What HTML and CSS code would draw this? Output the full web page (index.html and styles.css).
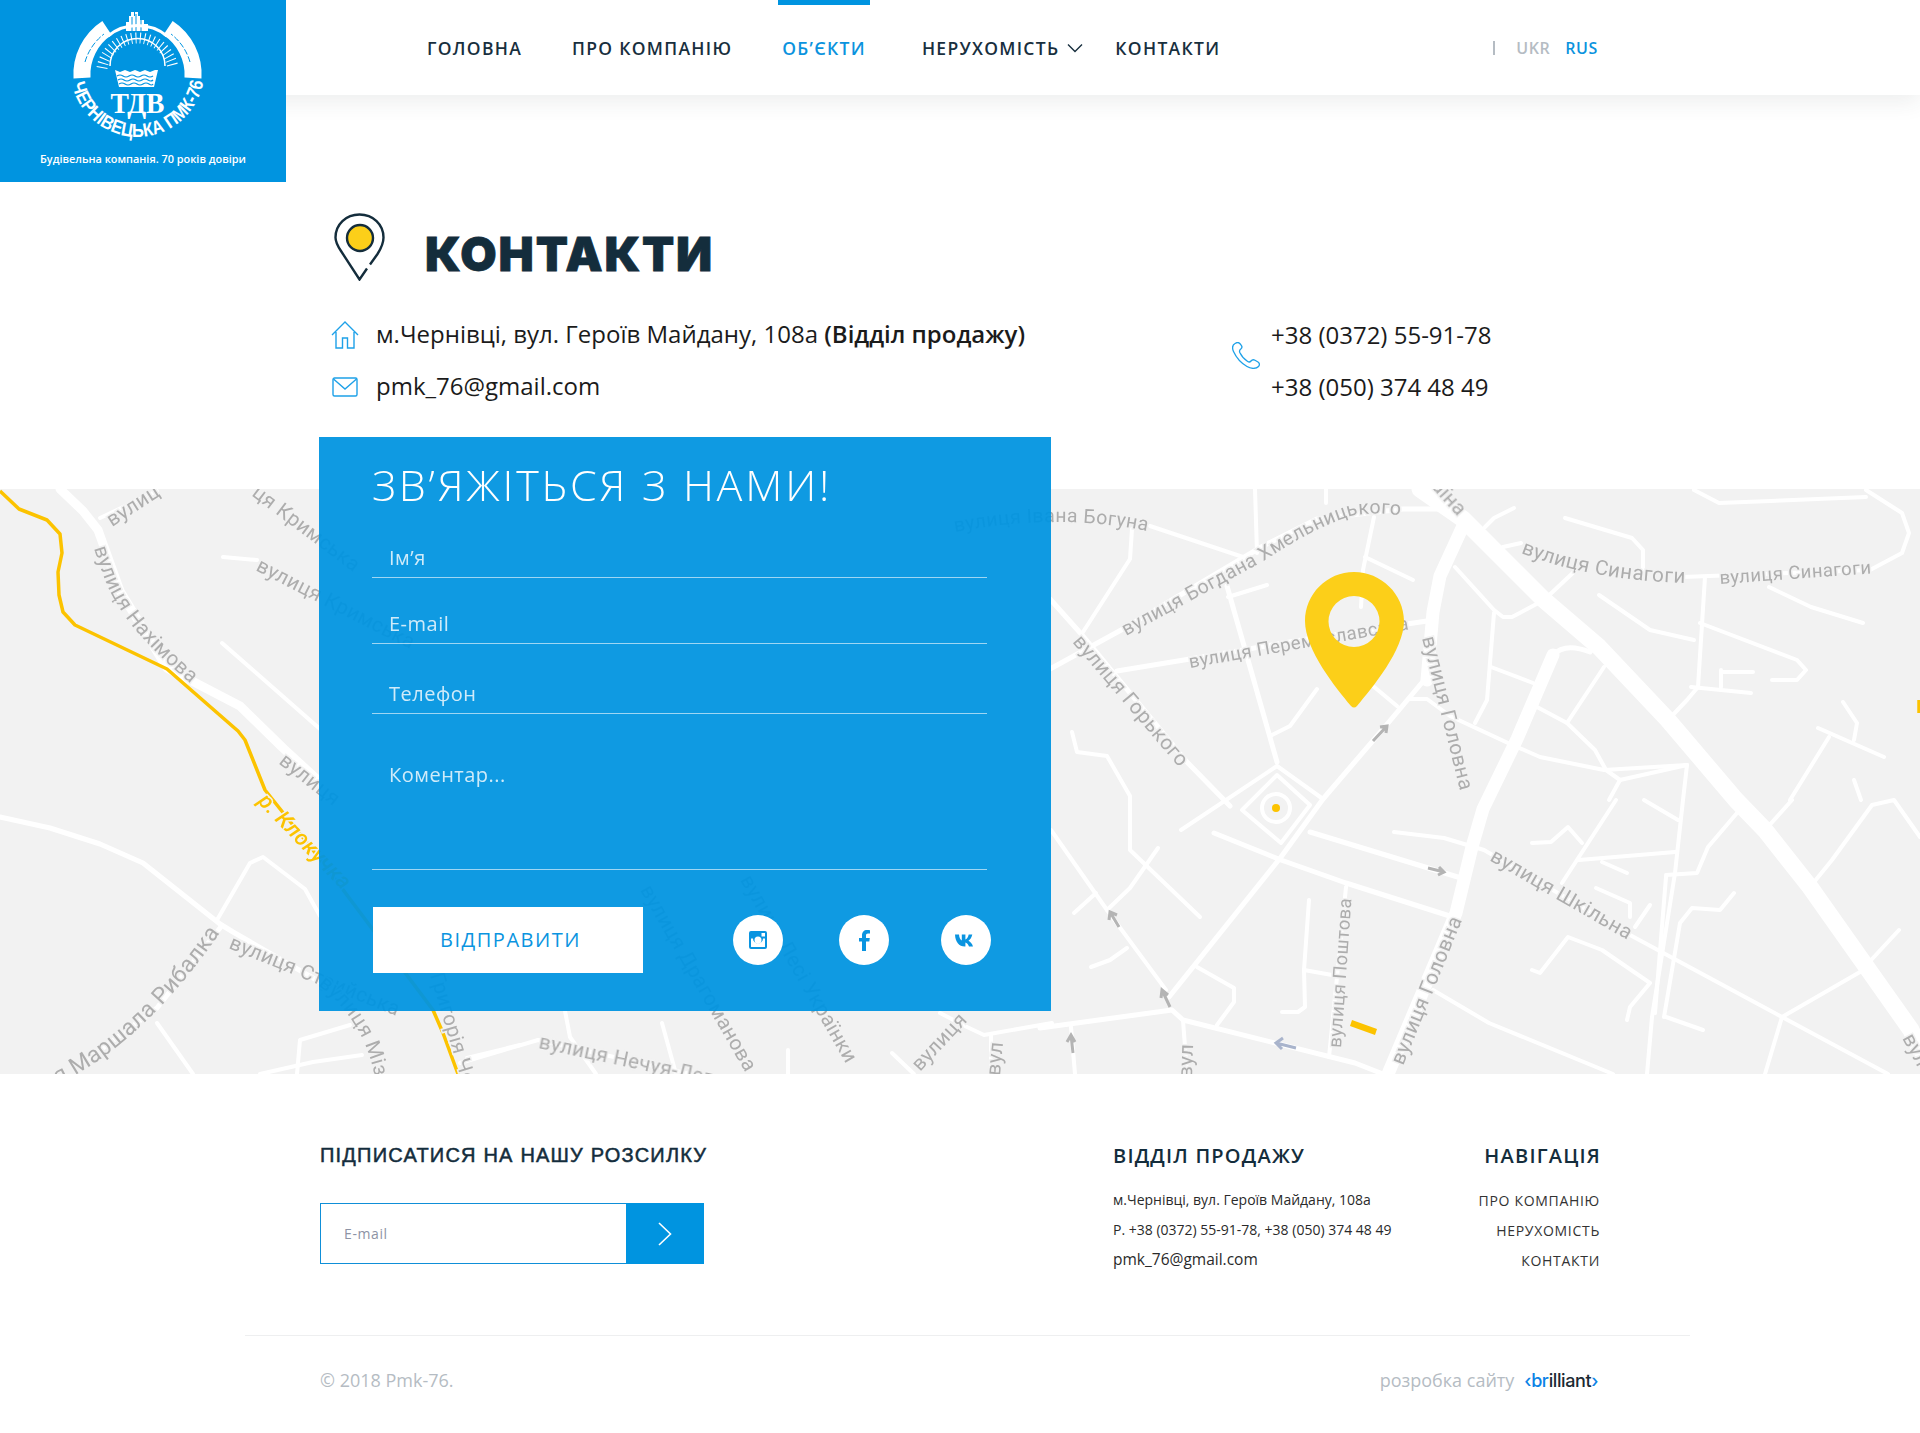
FILE: index.html
```html
<!DOCTYPE html>
<html lang="uk">
<head>
    <meta charset="UTF-8">
    <meta name="viewport" content="width=device-width, initial-scale=1.0">
    <title>Контакти</title>
    <link rel="stylesheet" href="styles.css">
</head>
<body>

    <header class="top-bar">
        <a class="logo" href="#">
            <svg class="logo-mark" viewBox="0 0 286 150" width="286" height="150">
                <!-- skyline -->
                <path fill="#fff" d="M126 31V22h3v-6h2v-4h3v4h1v-4h3v4h2v4h4v4h4v7z"/>
                <path stroke="#0094e0" stroke-width="1" fill="none" d="M132 17v14M136 14v17M141 20v11"/>
                <!-- top arc and wheat -->
                <path fill="none" stroke="#fff" stroke-width="3" d="M108 36A47 47 0 0 1 167 36"/>
                <path fill="none" stroke="#fff" stroke-width="17" d="M82 78A55.500 55.500 0 0 1 107 28"/>
                <path fill="none" stroke="#fff" stroke-width="17" d="M193 78A55.500 55.500 0 0 0 168 28"/>
                <path fill="none" stroke="#0094e0" stroke-width="1" stroke-dasharray="6 2" d="M85 62A54 54 0 0 1 104 34"/>
                <path fill="none" stroke="#0094e0" stroke-width="1" stroke-dasharray="6 2" d="M190 62A54 54 0 0 0 171 34"/>
                <!-- sun -->
                <path fill="none" stroke="#fff" stroke-width="1.600" d="M110 66A27.500 27.500 0 0 1 165 66"/>
                <path fill="none" stroke="#fff" stroke-width="11" stroke-dasharray="1 3.400" d="M102 68A36 36 0 0 1 173 68"/>
                <!-- basket -->
                <path fill="#fff" d="M115 70l5 2 5-2 5 2 5-2 5 2 5-2 5 2 5-2 3 0-4 17h-35z"/>
                <path fill="none" stroke="#0094e0" stroke-width="1.200" d="M117 76q3-2 6 0t6 0 6 0 6 0 6 0 6 0M118 80q3-2 6 0t6 0 6 0 6 0 6 0 5 0M119 84q3-2 6 0t6 0 6 0 6 0 6 0 4 0"/>
                <text class="logo-tdv" x="137.5" y="113" text-anchor="middle" textLength="54" lengthAdjust="spacingAndGlyphs">ТДВ</text>
                <path id="logoArc" fill="none" d="M72 84A67 67 0 0 0 203 84"/>
                <text class="logo-ring"><textPath href="#logoArc" textLength="184" lengthAdjust="spacingAndGlyphs">ЧЕРНІВЕЦЬКА ПМК-76</textPath></text>
            </svg>
            <span class="logo-text">Будівельна компанія. 70 років довіри</span>
        </a>

        <nav class="main-nav">
            <a href="#">Головна</a>
            <a href="#">Про компанію</a>
            <a class="active" href="#">Об’єкти</a>
            <a class="has-sub" href="#">Нерухомість
                <svg width="16" height="10" viewBox="0 0 16 10"><path d="M1 1.500l7 7 7-7" fill="none" stroke="#182f3e" stroke-width="1.400"/></svg>
            </a>
            <a href="#">Контакти</a>
        </nav>

        <div class="lang">
            <span class="lang-sep"></span>
            <a href="#">UKR</a>
            <a class="active" href="#">RUS</a>
        </div>
    </header>

    <section class="contacts">
        <div class="contacts-title">
            <svg width="51" height="68" viewBox="0 0 51 68">
                <path d="M33 55.500L25.500 66.500 7 38C3 32 1.500 27.500 1.500 24.500 1.500 11.500 12 1.500 25.500 1.500S49.500 11.500 49.500 24.500c0 5-2.500 11-6 16.500L36 51.500" fill="none" stroke="#142d3c" stroke-width="2.400"/>
                <circle cx="26" cy="25" r="13" fill="#fccf19" stroke="#142d3c" stroke-width="2.400"/>
            </svg>
            <h1>Контакти</h1>
        </div>

        <div class="contacts-info">
            <div class="contacts-left">
                <p class="info-row info-address">
                    <svg width="28" height="28" viewBox="0 0 28 28"><path d="M1 14L14 1l13 13M5 11v16h6.500V17h5v10H23V11" fill="none" stroke="#1ea1e8" stroke-width="1.400"/></svg>
                    <span>м.Чернівці, вул. Героїв Майдану, 108а <b>(Відділ продажу)</b></span>
                </p>
                <p class="info-row info-mail">
                    <svg width="28" height="20" viewBox="0 0 28 20"><rect x="2" y="1" width="24" height="18" rx="1.500" fill="none" stroke="#1ea1e8" stroke-width="1.400"/><path d="M2.500 2l11.500 10L25.500 2" fill="none" stroke="#1ea1e8" stroke-width="1.400"/></svg>
                    <span>pmk_76@gmail.com</span>
                </p>
            </div>
            <div class="contacts-right">
                <svg class="phone-icon" width="28" height="27" viewBox="0 0 28 27"><path d="M3 1.500C.5 3 0 6 1.500 9.500 4 15 9 21 15 24.500c4 2.500 9 2.500 11.500 0 1.500-1.500 1-3.500-.5-4.500l-3-1.800c-1.500-.8-3-.5-4 .8-.8 1-2 1.300-3.300.5C12.500 17.500 9.500 14 7.800 10.500 7.200 9 7.500 8 8.800 7 10 6 10.200 4.500 9.300 3.300L7.800 1.500C6.500 0 4.500.5 3 1.500z" fill="none" stroke="#1ea1e8" stroke-width="1.300"/></svg>
                <div class="phones">
                    <p>+38 (0372) 55-91-78</p>
                    <p>+38 (050) 374 48 49</p>
                </div>
            </div>
        </div>
    </section>

    <section class="map">
        <svg class="map-svg" viewBox="0 489 1920 585" width="1920" height="585">
            <g class="map-base">
                <g class="road r1">
                    <path d="M100 518L157 491"/>
                    <path d="M223 557L257 560"/>
                    <path d="M222 643L320 729L420 810"/>
                    <path d="M217 920L250 863L263 857L305 889L320 916"/>
                    <path d="M157 1023L193 1074"/>
                    <path d="M350 1025L300 1040L297 1074"/>
                    <path d="M362 1055L313 1062L260 1074"/>
                    <path d="M467 1058L520 1045"/>
                    <path d="M460 1063L538 1040L690 1074"/>
                    <path d="M565 1011L570 1037L596 1074"/>
                    <path d="M662 1023L676 1074"/>
                    <path d="M788 1050V1074M892 1053L914 1074"/>
                    <path d="M1052 1023L984 1035L967 1027L940 1013"/>
                    <path d="M991 1035V1074"/>
                    <path d="M520 700L720 760L900 960M640 489L720 700M860 560L1000 800"/>
                    <path d="M1150 526L1243 557"/>
                    <path d="M1132 529L1130 559L1083 632"/>
                    <path d="M1255 489L1257 553"/>
                    <path d="M1326 489V503"/>
                    <path d="M1374 517L1363 570L1361 607"/>
                    <path d="M1365 557L1413 580"/>
                    <path d="M1228 597L1267 585"/>
                    <path d="M1317 689L1290 726L1270 736"/>
                    <path d="M1072 732L1077 752L1107 756L1130 796V809"/>
                    <path d="M1373 686L1397 706"/>
                    <path d="M1410 699H1427L1450 716L1508 743L1540 757L1604 770L1687 765"/>
                    <path d="M1485 527L1494 518L1514 508"/>
                    <path d="M1503 547L1521 543"/>
                    <path d="M1694 490L1719 503L1866 497"/>
                    <path d="M1866 490L1902 513L1909 533L1902 553L1870 570L1682 577"/>
                    <path d="M1565 518L1632 538L1643 550V570"/>
                    <path d="M1705 577L1698 687L1687 700L1668 720"/>
                    <path d="M1599 595L1650 630L1694 640"/>
                    <path d="M1700 623L1797 660L1806 670L1797 680L1772 680"/>
                    <path d="M1769 587L1811 607L1863 623"/>
                    <path d="M1691 687L1751 693M1721 670V687M1721 672H1753"/>
                    <path d="M1455 567L1494 610L1503 617H1512L1544 600L1576 570"/>
                    <path d="M1494 613L1487 700L1475 723"/>
                    <path d="M1491 667L1533 683"/>
                    <path d="M1567 723L1604 667"/>
                    <path d="M1537 707L1567 723L1595 750L1606 770L1620 780L1687 765"/>
                    <path d="M1843 702L1857 723L1854 740"/>
                    <path d="M1818 728L1884 757"/>
                    <path d="M1829 737L1790 800"/>
                    <path d="M1854 780L1861 800"/>
                    <path d="M1687 765L1683 800L1675 873L1652 1017L1647 1074"/>
                    <path d="M1666 877L1655 1013"/>
                    <path d="M1620 780L1609 800"/>
                    <path d="M1130 800V850L1200 917"/>
                    <path d="M1158 848L1130 888L1107 910"/>
                    <path d="M1051 830L1107 910L1166 990"/>
                    <path d="M1074 913L1096 893"/>
                    <path d="M1091 967L1110 960L1127 948"/>
                    <path d="M1197 967L1234 988V1002L1217 1025"/>
                    <path d="M1183 1020L1187 1074"/>
                    <path d="M1071 1027L1075 1074"/>
                    <path d="M1309 900L1304 970L1305 1007L1298 1012H1282"/>
                    <path d="M1304 970L1332 975"/>
                    <path d="M1346 887L1329 1057"/>
                    <path d="M1394 832L1444 838L1484 850L1630 935L1782 1017L1888 1074"/>
                    <path d="M1433 990L1489 1023L1613 1074"/>
                    <path d="M1532 843L1551 842L1568 827L1582 843"/>
                    <path d="M1616 800L1562 883"/>
                    <path d="M1579 860L1675 852"/>
                    <path d="M1602 862L1627 873"/>
                    <path d="M1644 800L1678 820"/>
                    <path d="M1666 875L1697 873L1708 847L1737 813"/>
                    <path d="M1734 893L1720 910L1692 908L1680 923L1664 1017"/>
                    <path d="M1532 970L1540 973L1568 937L1602 950L1650 983L1630 1007L1627 1020"/>
                    <path d="M1666 1017L1703 1030"/>
                    <path d="M1782 1017L1860 972L1899 930"/>
                    <path d="M1782 1017L1765 1074"/>
                    <path d="M1765 830L1792 800"/>
                    <path d="M1810 887L1832 860L1872 805L1894 800L1920 837"/>
                    <path d="M1596 888L1630 903V917"/>
                    <path d="M1650 905L1635 927"/>
                    <path d="M1181 830L1277 766L1323 799"/>
                    <path d="M1242 810L1277 775L1310 805L1281 843Z"/>
                    <path d="M1262 808a14 14 0 1 0 28 0a14 14 0 1 0 -28 0"/>
                </g>
                <g class="road r2">
                    <path d="M1050 669L1123 629L1263 546L1317 519L1403 509H1460"/>
                    <path d="M1117 671L1190 659L1307 639L1427 621"/>
                    <path d="M1050 599L1083 636L1187 762L1230 806"/>
                    <path d="M1227 586L1277 762"/>
                    <path d="M1214 833L1281 860L1346 883L1456 918"/>
                    <path d="M1310 832L1461 878"/>
                    <path d="M1425 679L1383 729L1323 799L1281 857L1169 997"/>
                    <path d="M1040 1028L1172 1010L1183 1020L1355 1063L1383 1074"/>
                    <path d="M0 817L50 828L100 844L143 863L220 924L233 932L320 982"/>
                    <path d="M220 928L157 1008L80 1065"/>
                    <path d="M1765 830L1810 887"/>
                    <path d="M1590 652Q1565 642 1553 655"/>
                </g>
                <g class="road r3">
                    <path d="M60 489L83 511L98 530L120 591L167 668L240 706L283 748L320 782L440 880"/>
                </g>
                <g class="road r4">
                    <path d="M1463 526L1440 576L1433 612L1427 680"/>
                    <path d="M1553 655L1517 739L1483 809L1472 847L1456 913L1388 1074"/>
                </g>
                <g class="road r5">
                    <path d="M1420 489L1463 519L1543 599L1599 647L1668 720L1736 800L1765 830L1810 887L1911 1030L1920 1050"/>
                </g>

                <path class="river" d="M0 491L19 509L47 520L60 534L62 553L58 572L59 595L63 612L75 625L167 669L238 731L245 740L265 790L320 859L433 1010L443 1033L458 1074"/>
                <path class="river" d="M1919 700V713"/>
                <circle cx="1276" cy="808" r="4" fill="#fcc300"/>
                <path d="M1352 1020L1377 1029L1375 1035L1350 1026Z" fill="#fcc300"/>

                <path class="arrow" d="M1373 741L1387 726M1380 727L1387 726L1386 733"/>
                <path class="arrow" d="M1428 868L1444 872M1439 867L1444 872L1438 875"/>
                <path class="arrow" d="M1119 927L1110 912M1109 920L1110 912L1117 915"/>
                <path class="arrow" d="M1170 1007L1162 990M1161 998L1162 990L1168 995"/>
                <path class="arrow" d="M1073 1053L1071 1035M1067 1042L1071 1035L1075 1042"/>
                <path class="arrow blue" d="M1296 1048L1276 1043M1283 1038L1276 1043L1282 1049"/>

                <defs>
                    <path id="p-nah" d="M94 548C110 600 122 625 198 690"/>
                    <path id="p-rib" d="M58 1084Q150 1040 232 915"/>
                    <path id="p-miz" d="M318 985Q365 1020 376 1082"/>
                    <path id="p-gor" d="M430 975L462 1082"/>
                    <path id="p-bog" d="M955 532Q1060 512 1152 532"/>
                    <path id="p-hme" d="M1126 636L1262 562Q1320 524 1355 515Q1390 510 1430 522"/>
                    <path id="p-sin" d="M1521 553Q1590 580 1684 583"/>
                </defs>

                <text class="label" transform="translate(112 527) rotate(-33)">вулиц</text>
                <text class="label"><textPath href="#p-nah">вулиця Нахімова</textPath></text>
                <text class="label" transform="translate(251 495) rotate(37)">ця Кримська</text>
                <text class="label" transform="translate(255 570) rotate(27)">вулиця Кримська</text>
                <text class="label" transform="translate(278 763) rotate(38)">вулиця</text>
                <text class="label yellow" transform="translate(257 802) rotate(46)">р. Клокучка</text>
                <text class="label big"><textPath href="#p-rib">я Маршала Рибалка</textPath></text>
                <text class="label" transform="translate(228 948) rotate(22)">вулиця Стрийська</text>
                <text class="label"><textPath href="#p-miz">вулиця Мізин</textPath></text>
                <text class="label"><textPath href="#p-gor">Григорія Чер</textPath></text>
                <text class="label" transform="translate(538 1048) rotate(12)">вулиця Нечуя-Левицького</text>
                <text class="label" transform="translate(640 890) rotate(60)">вулиця Драгоманова</text>
                <text class="label" transform="translate(740 880) rotate(60)">вулиця Лесі Українки</text>
                <text class="label" transform="translate(920 1072) rotate(-47)">вулиця</text>
                <text class="label" transform="translate(1000 1076) rotate(-85)">вул</text>
                <text class="label mid"><textPath href="#p-bog">вулиця Івана Богуна</textPath></text>
                <text class="label mid"><textPath href="#p-hme">вулиця Богдана Хмельницького</textPath></text>
                <text class="label" text-anchor="end" transform="translate(1458 517) rotate(48)">вулиця Україна</text>
                <text class="label"><textPath href="#p-sin">вулиця Синагоги</textPath></text>
                <text class="label small" transform="translate(1720 584) rotate(-4)">вулиця Синагоги</text>
                <text class="label" transform="translate(1072 642) rotate(49.500)">вулиця Горького</text>
                <text class="label small" transform="translate(1190 668) rotate(-10)">вулиця Перемиславська</text>
                <text class="label" transform="translate(1422 638) rotate(76)">вулиця Головна</text>
                <text class="label small" transform="translate(1341 1048) rotate(-86)">вулиця Поштова</text>
                <text class="label" transform="translate(1403 1066) rotate(-68)">вулиця Головна</text>
                <text class="label" transform="translate(1489 860) rotate(30)">вулиця Шкільна</text>
                <text class="label" transform="translate(1902 1038) rotate(62)">вул</text>
                <text class="label" transform="translate(1192 1078) rotate(-88)">вул</text>
            </g>

            <!-- marker, the hole shows the map through -->
            <path fill="#fccf19" fill-rule="evenodd" d="M1354 572C1381 572 1404 594 1404 621C1404 650 1372 688 1357 706Q1354 709 1351 706C1336 688 1305 650 1305 621C1305 594 1327 572 1354 572ZM1354 596A25.500 25.500 0 1 0 1354 647A25.500 25.500 0 1 0 1354 596Z"/>
        </svg>

        <form class="contact-card">
            <h2>Зв’яжіться з нами!</h2>
            <input class="field field-name" type="text" placeholder="Ім’я">
            <input class="field field-mail" type="text" placeholder="E-mail">
            <input class="field field-phone" type="text" placeholder="Телефон">
            <textarea class="field field-comment" placeholder="Коментар..."></textarea>
            <div class="card-bottom">
                <button type="button">Відправити</button>
                <a class="social social-ig" href="#">
                    <svg width="18" height="18" viewBox="0 0 18 18"><path fill-rule="evenodd" fill="#0a94e0" d="M2 0h14a2 2 0 0 1 2 2v14a2 2 0 0 1-2 2H2a2 2 0 0 1-2-2V2a2 2 0 0 1 2-2zM12.500 2v3.500H16V2zM2 7.500V15.500a.5.500 0 0 0 .5.500h13a.5.500 0 0 0 .5-.500V7.500H14a5 5 0 1 1-10 0zM9 5.500a3.500 3.500 0 1 0 0 7a3.500 3.500 0 1 0 0-7z"/></svg>
                </a>
                <a class="social social-fb" href="#">
                    <svg width="11" height="21" viewBox="0 0 11 21"><path fill="#0a94e0" d="M3 21V11.500H0V8h3V5.500C3 2 5 0 8 0c1.300 0 2.300.1 3 .2v3.200H9c-1.500 0-2 .7-2 2V8h3.800l-.5 3.500H7V21z"/></svg>
                </a>
                <a class="social social-vk" href="#">
                    <svg width="22" height="13" viewBox="0 0 22 13"><path fill="#0a94e0" d="M0 .5h4c.2 3 1.500 5.500 2.800 6V.5h3.600v5c1.300-.2 2.700-2.300 3.300-5h3.600c-.5 3-2.400 5.300-3.800 6.200 1.400.7 3.600 2.500 4.500 5.800h-4c-.7-2.200-2.300-3.900-3.600-4.100v4.100H9.800C4 12.500.3 8 0 .5z"/></svg>
                </a>
            </div>
        </form>
    </section>

    <footer class="footer">
        <div class="footer-top">
            <div class="subscribe">
                <h4>Підписатися на нашу розсилку</h4>
                <div class="subscribe-form">
                    <input type="text" placeholder="E-mail">
                    <button type="button">
                        <svg width="14" height="24" viewBox="0 0 14 24"><path d="M1 1l11.500 11L1 23" fill="none" stroke="#fff" stroke-width="1.600"/></svg>
                    </button>
                </div>
            </div>
            <div class="sales">
                <h4>Відділ продажу</h4>
                <p>м.Чернівці, вул. Героїв Майдану, 108а</p>
                <p>Р. +38 (0372) 55-91-78, +38 (050) 374 48 49</p>
                <p class="sales-mail">pmk_76@gmail.com</p>
            </div>
            <div class="foot-nav">
                <h4>Навігація</h4>
                <a href="#">Про компанію</a>
                <a href="#">Нерухомість</a>
                <a href="#">Контакти</a>
            </div>
        </div>
        <div class="footer-bottom">
            <span>© 2018 Pmk-76.</span>
            <span class="dev">розробка сайту <a class="brilliant" href="#"><i>‹br</i>illiant<i>›</i></a></span>
        </div>
    </footer>

</body>
</html>
```
FILE: styles.css
```css
* {
    box-sizing: border-box;
}

body {
    margin: 0;
    font-family: 'Open Sans', sans-serif;
    color: #1b1b1b;
    background-color: #fff;
}

a {
    text-decoration: none;
    color: inherit;
}

p {
    margin: 0;
}

/* header */
.top-bar {
    position: relative;
    z-index: 5;
    display: flex;
    align-items: center;
    height: 95px;
    background-color: #fff;
    box-shadow: 0 6px 22px rgba(40, 60, 60, 0.09);
}

.logo {
    position: absolute;
    top: 0;
    left: 0;
    width: 286px;
    height: 182px;
    background-color: #0094e0;
    color: #fff;
}

.logo-mark {
    display: block;
}

.logo-tdv {
    font-family: 'Liberation Serif', serif;
    font-weight: 700;
    font-size: 29px;
    fill: #fff;
}

.logo-ring {
    font-family: 'Liberation Sans', sans-serif;
    font-weight: 700;
    font-size: 19px;
    fill: #fff;
}

.logo-text {
    display: block;
    padding-left: 40px;
    font-size: 10.9px;
    font-weight: 600;
    line-height: 18px;
    white-space: nowrap;
}

.main-nav {
    display: flex;
    align-items: center;
    height: 100%;
    padding-left: 402px;
}

.main-nav a {
    position: relative;
    display: flex;
    align-items: center;
    height: 100%;
    padding: 0 25px;
    font-size: 17.5px;
    font-weight: 600;
    letter-spacing: 1.3px;
    text-transform: uppercase;
    color: #182f3e;
}

.main-nav a.active {
    padding-right: 31px;
    color: #0b93de;
}

.main-nav a.active::before {
    content: "";
    position: absolute;
    top: 0;
    left: 21px;
    right: 27px;
    height: 5px;
    background-color: #0094e0;
}

.main-nav a.has-sub {
    padding-right: 7px;
    gap: 8px;
}

.lang {
    display: flex;
    align-items: center;
    gap: 15px;
    margin-left: auto;
    margin-right: 322px;
    font-size: 16px;
    font-weight: 600;
    letter-spacing: 0.6px;
    color: #b5bcc3;
}

.lang .active {
    color: #0b93de;
}

.lang-sep {
    width: 2px;
    height: 14px;
    margin-right: 6px;
    background-color: #b5bcc3;
}

/* contacts */
.contacts {
    height: 394px;
    padding-top: 118px;
    padding-left: 334px;
}

.contacts-title {
    display: flex;
    align-items: center;
    gap: 40px;
    height: 68px;
}

.contacts-title h1 {
    margin: 12px 0 0;
    font-family: 'Inter', sans-serif;
    font-weight: 900;
    font-size: 47px;
    letter-spacing: 1.8px;
    text-transform: uppercase;
    color: #142d3c;
    -webkit-text-stroke: 0.8px #142d3c;
}

.contacts-info {
    display: flex;
    margin-top: 29px;
}

.contacts-left {
    width: 898px;
}

.info-row {
    display: flex;
    align-items: center;
    gap: 17px;
    height: 50px;
    margin-left: -3px;
    font-size: 24px;
}

.info-row svg {
    flex: none;
}

.info-address span {
    margin-bottom: 4px;
}

.info-mail svg {
    margin-top: 3px;
}

.info-row b {
    font-weight: 600;
}

.contacts-right {
    display: flex;
    align-items: center;
    gap: 11px;
    font-size: 24px;
}

.phone-icon {
    margin-bottom: 14px;
}

.phones p {
    height: 52px;
    line-height: 50px;
}

/* map */
.map {
    position: relative;
    height: 585px;
    background-color: #f2f2f2;
}

.map-svg {
    display: block;
}

.map-base {
    filter: blur(0.5px);
}

.road path {
    fill: none;
    stroke: #fff;
    stroke-linejoin: round;
    stroke-linecap: round;
}

.r1 path {
    stroke-width: 4px;
}

.r2 path {
    stroke-width: 5px;
}

.r3 path {
    stroke-width: 9px;
}

.r4 path {
    stroke-width: 13px;
}

.r5 path {
    stroke-width: 17px;
}

.river {
    fill: none;
    stroke: #fcc300;
    stroke-width: 3.5px;
    stroke-linejoin: round;
}

.arrow {
    fill: none;
    stroke: #b4b4b4;
    stroke-width: 3px;
}

.arrow.blue {
    stroke: #a9b4cc;
}

.label {
    font-family: 'Roboto', sans-serif;
    font-size: 20.5px;
    letter-spacing: 0.4px;
    fill: #adadad;
    stroke: #f2f2f2;
    stroke-width: 3px;
    paint-order: stroke;
}

.label.small {
    font-size: 18.5px;
}

.label.mid {
    font-size: 19.5px;
}

.label.big {
    font-size: 23px;
}

.label.yellow {
    font-size: 22px;
    font-style: italic;
    font-weight: 500;
    fill: #fcc300;
}

.contact-card {
    position: absolute;
    top: -52px;
    left: 319px;
    width: 732px;
    height: 574px;
    padding: 20px 40px 0 53px;
    background-color: rgba(0, 148, 224, 0.94);
    color: #fff;
}

.contact-card h2 {
    margin: 0 0 21px;
    font-size: 43px;
    font-weight: 300;
    line-height: 56px;
    letter-spacing: 2.8px;
    text-transform: uppercase;
    white-space: nowrap;
}

.field {
    display: block;
    width: 615px;
    height: 44px;
    padding: 4px 17px 0;
    border: 0;
    border-bottom: 1px solid rgba(255, 255, 255, 0.6);
    background: none;
    font-family: inherit;
    font-size: 20px;
    letter-spacing: 0.5px;
    color: #fff;
    resize: none;
}

.field::placeholder {
    color: rgba(255, 255, 255, 0.8);
    opacity: 1;
}

.field-name {
    margin-top: 1px;
}

.field-mail {
    margin-top: 22px;
}

.field-phone {
    margin-top: 26px;
}

.field-comment {
    height: 126px;
    margin-top: 30px;
    padding-top: 18px;
    line-height: 26px;
}

.card-bottom {
    display: flex;
    align-items: center;
    margin-top: 37px;
}

.card-bottom button {
    flex: none;
    width: 270px;
    height: 66px;
    margin-left: 1px;
    padding: 0 0 2px 5px;
    border: 0;
    background-color: #fff;
    font-family: inherit;
    font-size: 20px;
    font-weight: 400;
    letter-spacing: 1.5px;
    text-transform: uppercase;
    color: #0a94e0;
}

.social {
    flex: none;
    display: flex;
    align-items: center;
    justify-content: center;
    width: 50px;
    height: 50px;
    border-radius: 50%;
    background-color: #fff;
}

.social-ig {
    margin-left: 90px;
}

.social-fb {
    margin-left: 56px;
}

.social-vk {
    margin-left: 52px;
}

/* footer */
.footer {
    height: 359px;
    padding-top: 69px;
}

.footer-top {
    display: flex;
    height: 192px;
    padding: 0 319px 0 320px;
}

.footer h4 {
    margin: 0;
    font-size: 20px;
    font-weight: 600;
    line-height: 26px;
    letter-spacing: 1.2px;
    text-transform: uppercase;
    color: #142d3c;
}

.subscribe {
    width: 793px;
}

.subscribe h4 {
    margin-top: -1px;
    font-family: 'Liberation Sans', sans-serif;
    font-size: 20px;
    letter-spacing: 1.2px;
    font-weight: 400;
    -webkit-text-stroke: 0.5px #142d3c;
}

.subscribe-form {
    display: flex;
    width: 384px;
    height: 61px;
    margin-top: 35px;
}

.subscribe-form input {
    flex: 1;
    min-width: 0;
    padding: 0 23px;
    border: 1px solid #0f8fd8;
    border-right: 0;
    font-family: inherit;
    font-size: 14px;
    letter-spacing: 0.6px;
}

.subscribe-form input::placeholder {
    color: #8d93a5;
    opacity: 1;
}

.subscribe-form button {
    display: flex;
    align-items: center;
    justify-content: center;
    width: 78px;
    border: 0;
    background-color: #0094e0;
}

.sales h4 {
    margin-bottom: 16px;
}

.sales p {
    height: 30px;
    font-size: 14px;
    line-height: 30px;
    color: #2a2a2a;
    white-space: nowrap;
}

.sales p.sales-mail {
    margin-top: -1px;
    font-size: 15.500px;
}

.foot-nav {
    display: flex;
    flex-direction: column;
    align-items: flex-end;
    margin-left: auto;
}

.foot-nav h4 {
    margin-bottom: 16px;
}

.foot-nav a {
    height: 30px;
    margin-right: 1px;
    font-size: 14px;
    line-height: 32px;
    letter-spacing: 0.7px;
    text-transform: uppercase;
    color: #333;
}

.footer-bottom {
    display: flex;
    justify-content: space-between;
    align-items: center;
    margin: 0 230px 0 245px;
    height: 94px;
    padding: 0 92px 5px 75px;
    border-top: 1px solid #eeeff0;
    font-size: 18px;
    color: #b5bcc3;
}

.dev {
    display: flex;
    align-items: center;
    gap: 10px;
}

.brilliant {
    font-family: 'Inter', sans-serif;
    font-size: 18px;
    font-weight: 500;
    letter-spacing: -0.4px;
    color: #1b2a33;
}

.brilliant i {
    font-style: normal;
    color: #0c83e6;
}
```
